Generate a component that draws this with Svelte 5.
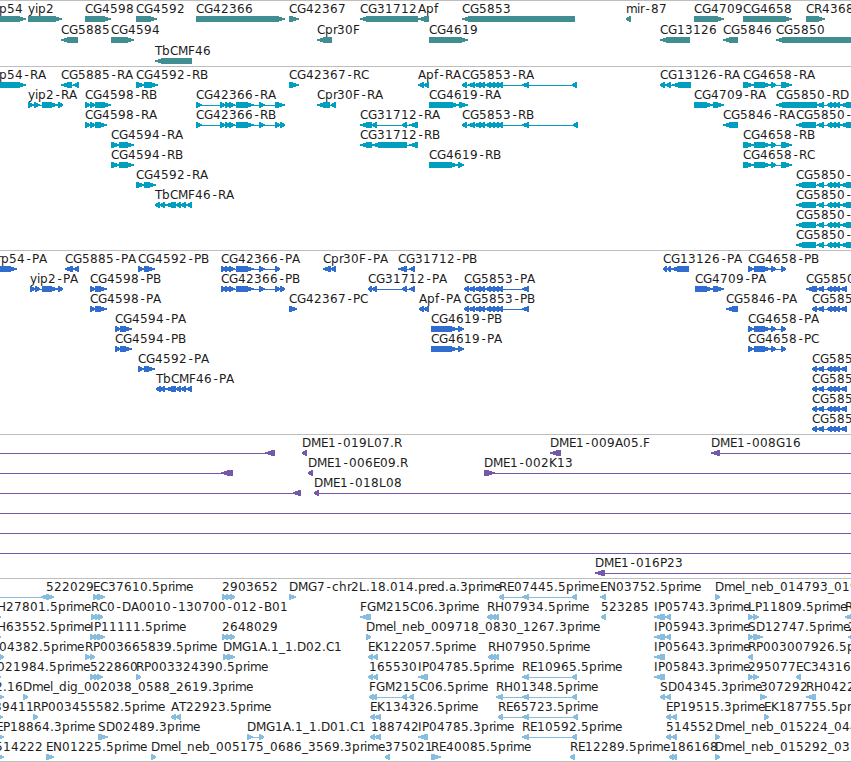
<script>
  // Feature notation: row | label x | label | strand | exon spans (start:end)
  const exons5853 = '468:475,474:481,479:485,485:491,490:495,494:499,498:503,522:529';
  const exons5850 = '817:824,827:832,831:836,835:840';
  const tracks = [
    { height: 66, pitch: 21, color: '#408e91', features: `
0|-1|p54|R|-10:26
0|28|yip2|R|28:62
0|85|CG4598|R|85:111
0|136|CG4592|R|136:157
0|196|CG42366|R|196:285
0|289|CG42367|R|289:299
0|360|CG31712|L|360:418
0|418|Apf|L|418:429
0|462|CG5853|L|462:575
0|626|mir-87|L|626:631
0|694|CG4709|R|694:724
0|743|CG4658|R|743:792
0|806|CR4368|R|806:825
1|61|CG5885|L|61:78
1|111|CG4594|R|111:134
1|317|Cpr30F|L|317:332
1|429|CG4619|R|429:468
1|660|CG13126|L|660:690
1|723|CG5846|L|723:738
1|776|CG5850|L|776:870
2|155|TbCMF46|L|155:192` },
    { height: 184, pitch: 20, color: '#009ebf', features: `
0|-1|p54-RA|R|-10:26
0|61|CG5885-RA|L|61:72,73:79
0|136|CG4592-RB|R|136:144,144:158
0|289|CG42367-RC|R|289:299
0|418|Apf-RA|L|418:424,423:429
0|462|CG5853-RA|L|462:467,${exons5853},572:577
0|660|CG13126-RA|L|660:665,665:671,672:691
0|743|CG4658-RA|R|743:754,754:771,771:776,781:792
1|28|yip2-RA|R|28:34,34:40,42:58,58:63
1|85|CG4598-RB|R|85:90,90:95,95:111
1|196|CG42366-RA|R|196:202,220:225,225:230,229:235,236:254,259:265,275:285
1|317|Cpr30F-RA|L|317:330,331:336
1|429|CG4619-RA|R|429:459,459:468
1|694|CG4709-RA|R|694:713,713:724
1|776|CG5850-RD|L|776:817,${exons5850},840:858
2|85|CG4598-RA|R|85:90,90:95,95:107
2|196|CG42366-RB|R|196:202,220:225,225:230,229:235,236:254,259:265,275:280,280:285
2|360|CG31712-RA|L|360:372,372:377,402:407,409:418
2|462|CG5853-RB|L|462:467,${exons5853},573:578
2|723|CG5846-RA|L|723:738
2|796|CG5850-|L|796:816,${exons5850},840:858
3|111|CG4594-RA|R|111:119,119:134
3|360|CG31712-RB|L|360:372,372:407,409:418
3|743|CG4658-RB|R|743:754,754:771,771:776,781:792
4|111|CG4594-RB|R|111:119,119:134
4|429|CG4619-RB|R|429:458,458:464
4|743|CG4658-RC|R|743:754,754:771,771:776,781:792
5|136|CG4592-RA|R|136:144,144:156
6|155|TbCMF46-RA|L|155:160,160:165,165:176,176:181,181:186,186:192
5|796|CG5850-|L|796:816,${exons5850},840:858
6|796|CG5850-|L|796:816,${exons5850},840:858
7|796|CG5850-|L|796:816,${exons5850},840:858
8|796|CG5850-|L|796:816,${exons5850},840:858` },
    { height: 184, pitch: 20, color: '#316dce', features: `
0|-3|rp54-PA|R|-10:17
0|65|CG5885-PA|L|65:73,73:79
0|138|CG4592-PB|R|138:144,144:155
0|221|CG42366-PA|R|221:226,225:230,229:235,236:254,259:265,275:280
0|323|Cpr30F-PA|L|323:331,331:336
0|398|CG31712-PB|L|398:407,409:415
0|663|CG13126-PA|L|663:667,667:671,671:689
0|748|CG4658-PB|R|748:754,754:771,771:776,781:786
1|30|yip2-PA|R|30:35,35:40,42:58,58:63
1|90|CG4598-PB|R|90:95,95:107
1|221|CG42366-PB|R|221:226,225:230,229:235,236:254,259:265,275:280,280:285
1|368|CG31712-PA|L|368:372,372:377,402:407,409:415
1|464|CG5853-PA|L|464:469,${exons5853}
1|695|CG4709-PA|R|695:713,713:724
1|806|CG5850|L|806:817,${exons5850},840:847
2|90|CG4598-PA|R|90:95,95:107
2|289|CG42367-PC|R|289:297
2|419|Apf-PA|L|419:424,424:429
2|464|CG5853-PB|L|464:469,${exons5853}
2|726|CG5846-PA|L|726:738
2|812|CG585|L|812:817,${exons5850},840:847
3|115|CG4594-PA|R|115:120,120:132
3|431|CG4619-PB|R|431:458,458:464
3|748|CG4658-PA|R|748:754,754:771,771:776,781:786
4|115|CG4594-PB|R|115:120,120:132
4|431|CG4619-PA|R|431:458,458:464
4|748|CG4658-PC|R|748:754,754:771,771:776,781:786
5|138|CG4592-PA|R|138:144,144:155
6|156|TbCMF46-PA|L|156:161,160:165,165:176,176:181,181:186,186:192
5|812|CG585|L|812:817,${exons5850},840:847
6|812|CG585|L|812:817,${exons5850},840:847
7|812|CG585|L|812:817,${exons5850},840:847
8|812|CG585|L|812:817,${exons5850},840:847` },
    { height: 144, pitch: 20, color: '#7558a8', features: `
0|0||L|-20:-12,265:275
0|302|DME1-019L07.R|L|302:307
0|550|DME1-009A05.F|L|550:561
0|711|DME1-008G16|L|711:720,900:905
1|0||L|-20:-12,221:233
1|308|DME1-006E09.R|L|308:313
1|484|DME1-002K13|R|484:495,900:905
2|0||L|-20:-12,293:301
2|314|DME1-018L08|L|314:319,900:905
3|0||L|-20:-12,900:905
4|0||L|-20:-12,900:905
5|0||L|-20:-12,900:905
6|595|DME1-016P23|L|595:605,900:905` },
    { height: 183, pitch: 20, color: '#87bdde', features: `
0|0||L|-20:-12,41:48
0|46|522029|R|46:54
0|93|EC37610.5prime|R|93:99,97:105
0|222|2903652|R|222:227,226:231,230:235
0|289|DMG7-chr2L.18.014.pred.a.3prime|R|289:296
0|499|RE07445.5prime|L|499:504,522:529,572:577
0|600|EN03752.5prime|L|600:606
0|715|Dmel_neb_014793_019|R|715:720
1|-3|H27801.5prime|R|-5:1
1|91|RC0-DA0010-130700-012-B01|R|91:96,95:99,98:103
1|360|FGM215C06.3prime|L|360:371
1|487|RH07934.5prime|L|487:492,491:496,494:499
1|601|523285|L|601:606
1|654|IP05743.3prime|L|654:665,665:671
1|748|LP11809.5prime|R|748:754,753:759
1|845|R|L|845:853
2|-3|H63552.5prime|R|-5:1
2|90|IP11111.5prime|R|90:95,94:99,97:105
2|222|2648029|R|222:227,226:231,230:235
2|366|Dmel_neb_009718_0830_1267.3prime|R|366:371
2|654|IP05943.3prime|L|654:665,665:671
2|748|SD12747.5prime|R|748:754,753:763
2|848|2|L|848:855
3|-1|04382.5prime|R|-1:4
3|85|RP003665839.5prime|R|85:90,90:95
3|223|DMG1A.1_1.D02.C1|R|223:228,227:235
3|368|EK122057.5prime|L|368:373,372:378
3|488|RH07950.5prime|L|488:493,492:496,494:499
3|654|IP05643.3prime|L|654:665
3|748|RP003007926.5p|L|748:753
4|-3|021984.5prime|R|-5:1
4|90|522860|R|90:95,94:99,97:103
4|136|RP003324390.5prime|R|136:141
4|369|165530|L|368:373,372:378
4|418|IP04785.5prime|L|418:428
4|522|RE10965.5prime|L|522:529,572:577
4|654|IP05843.3prime|L|654:665
4|748|295077|R|748:754,753:759
4|796|EC34316|L|796:801
5|-5|2.16|R|-2:4
5|23|Dmel_dig_002038_0588_2619.3prime|R|23:28
5|369|FGM215C06.5prime|L|369:374,372:377,402:407,409:414
5|496|RH01348.5prime|L|496:503,522:529,572:577
5|660|SD04345.3prime|L|660:665,665:671
5|760|307292|R|760:767
5|806|RH0422|L|806:816
6|-6|39411|R|-3:3
6|33|RP003455582.5prime|R|33:38
6|171|AT22923.5prime|L|171:176,176:181
6|370|EK134326.5prime|L|370:375,374:381
6|498|RE65723.5prime|L|498:503,522:529,573:578
6|666|EP19515.3prime|L|666:671,671:677
6|764|EK187755.5pr|R|764:769
7|-4|EP18864.3prime|R|-2:4
7|98|SD02489.3prime|R|98:108
7|247|DMG1A.1_1.D01.C1|R|247:253,259:264
7|371|188742|L|370:375,374:381
7|418|IP04785.3prime|L|418:428
7|522|RE10592.5prime|L|522:529,572:577
7|666|514552|L|666:671,671:677
7|715|Dmel_neb_015224_044|R|715:720
8|-5|514222|R|-2:4
8|46|EN01225.5prime|R|46:54
8|151|Dmel_neb_005175_0686_3569.3prime|R|151:156
8|385|375021|L|385:390
8|431|RE40085.5prime|R|431:441
8|570|RE12289.5prime|L|570:575
8|670|186168|L|669:674,672:677
8|715|Dmel_neb_015292_03|R|715:720` },
  ];

  const advance = {
    G: 9, D: 9, M: 10, N: 9, H: 9, E: 7, F: 7, P: 7, L: 7, T: 7, I: 4,
    '-': 7, '.': 4, _: 6, m: 11, i: 3, l: 3, r: 4, f: 4, e: 7, a: 7, c: 7, y: 7,
  };

  // Side bearing that centres narrow glyphs in their cell.
  const bearing = { '-': 1.4 };

  // Pen positions, one for each character of a label.
  function pens(x, label) {
    const list = [];
    for (const ch of label) {
      list.push(x + (bearing[ch] ?? 0));
      x += advance[ch] ?? 8;
    }
    return list.join(' ');
  }

  function arrow(a, b, strand, top) {
    const size = b - a;
    const head = Math.min(8, size - 1);
    const sign = strand === 'R' ? 1 : -1;
    const [back, tip] = strand === 'R' ? [a, b] : [b, a];
    const neck = tip - sign * head;
    const mid = tip - sign * head * 0.35;
    return `M${back} ${top}H${neck}L${mid} ${top + 1.5}L${tip} ${top + 2.4}V${top + 3.6}L${mid} ${top + 4.5}L${neck} ${top + 6}H${back}Z`;
  }

  const parsed = tracks.map((t) => ({
    ...t,
    features: t.features.trim().split('\n').map((line) => {
      const [row, x, label, strand, spans] = line.split('|');
      const top = 15 + row * t.pitch;
      const exons = spans.split(',').map((s) => s.split(':').map(Number));
      return {
        label,
        xs: pens(Number(x), label),
        base: top - 3,
        top,
        from: exons[0][0],
        to: exons[exons.length - 1][1],
        path: exons.map(([a, b]) => arrow(a, b, strand, top)).join(''),
      };
    }),
  }));
</script>

<main>
  {#each parsed as track}
    <section style:height="{track.height}px">
      <svg width="851" height={track.height - 1} fill={track.color}>
        {#each track.features as f}
          {#if f.to - f.from > 12}
            <rect x={f.from + 1} y={f.top + 3} width={f.to - f.from - 2} height="1" />
          {/if}
          <path d={f.path} />
          {#if f.label}
            <text x={f.xs} y={f.base}>{f.label}</text>
          {/if}
        {/each}
      </svg>
    </section>
  {/each}
</main>

<style>
  :global(body) {
    margin: 0;
    background: #fff;
  }
  main {
    display: flex;
    flex-direction: column;
    width: 851px;
    height: 762px;
    box-sizing: border-box;
    border-bottom: 1px solid #bebebe;
    overflow: hidden;
  }
  section {
    flex: none;
    box-sizing: border-box;
    border-top: 1px solid #bebebe;
  }
  svg {
    display: block;
    overflow: hidden;
  }
  path,
  rect {
    shape-rendering: crispEdges;
  }
  text {
    font-family: 'DejaVu Sans', sans-serif;
    font-size: 12px;
    fill: #1c1c1c;
  }
</style>
